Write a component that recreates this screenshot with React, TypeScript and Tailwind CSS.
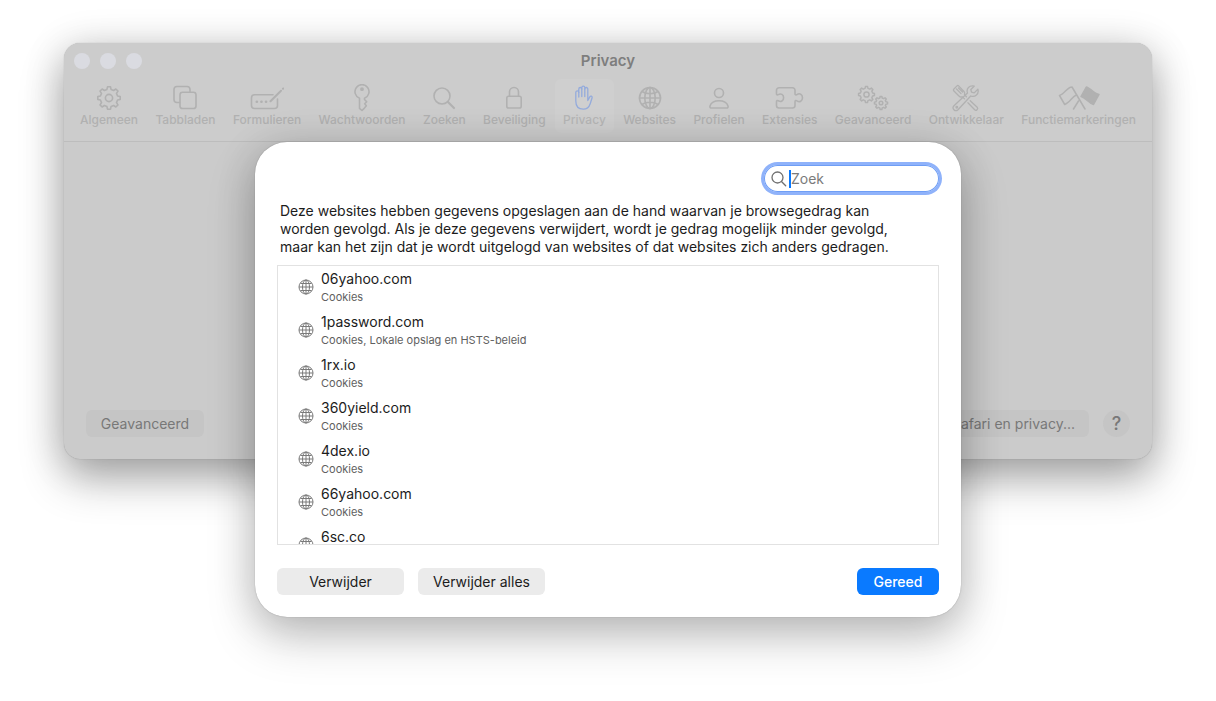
import type { ReactNode } from "react";

const gearPath = (cx: number, cy: number, outer: number, inner: number, teeth = 8) => {
  const step = (Math.PI * 2) / teeth;
  const at = (r: number, a: number) => `${(cx + r * Math.sin(a)).toFixed(2)} ${(cy - r * Math.cos(a)).toFixed(2)}`;
  const pts: string[] = [];
  for (let i = 0; i < teeth; i++) {
    const a = i * step;
    pts.push(at(inner, a - step * 0.3), at(outer, a - step * 0.17), at(outer, a + step * 0.17), at(inner, a + step * 0.3));
  }
  return `M${pts.join("L")}Z`;
};

function Icon({ w, stroke = 1.6, children }: { w: number; stroke?: number; children: ReactNode }) {
  return (
    <svg
      width={w}
      height={28}
      viewBox={`0 0 ${w} 28`}
      fill="none"
      stroke="currentColor"
      strokeWidth={stroke}
      strokeLinecap="round"
      strokeLinejoin="round"
      aria-hidden="true"
    >
      {children}
    </svg>
  );
}

const icons: Record<string, ReactNode> = {
  gear: (
    <Icon w={26}>
      <path d={gearPath(13, 14, 11.3, 8.8)} />
      <circle cx="13" cy="14" r="3.6" />
    </Icon>
  ),
  tabs: (
    <Icon w={26}>
      <path d="M7.5 18.5H5a3 3 0 0 1-3-3v-10a3 3 0 0 1 3-3h10a3 3 0 0 1 3 3V8" />
      <rect x="8" y="8.2" width="16" height="16.3" rx="2.6" />
    </Icon>
  ),
  form: (
    <Icon w={34}>
      <path d="M23 10.7H4.5a3 3 0 0 0-3 3v7.8a3 3 0 0 0 3 3h20a3 3 0 0 0 3-3V15" />
      <path d="M20.5 17.2 31 6.8M33 4.8l.3-.3" strokeWidth="2" />
      <path d="M6.8 17.7h.1M11.4 17.7h.1M16 17.7h.1" strokeWidth="2.6" />
    </Icon>
  ),
  key: (
    <Icon w={18}>
      <path d="M6.5 14.2a7 7 0 1 1 5 0v1.3l2.2 2.2-2 2 1.6 2-2.4 3-1.9 1.8-2.5-2.1z" />
      <circle cx="9" cy="5.2" r="1.1" fill="currentColor" />
    </Icon>
  ),
  search: (
    <Icon w={24}>
      <circle cx="10" cy="12" r="8" />
      <path d="m16.2 18.2 5.8 5.8" strokeWidth="2.2" />
    </Icon>
  ),
  lock: (
    <Icon w={18}>
      <rect x="1.8" y="12.3" width="14.4" height="11.7" rx="1.8" />
      <path d="M4.5 12V8a4.5 4.5 0 0 1 9 0v4" />
    </Icon>
  ),
  hand: (
    <Icon w={20} stroke={1.3}>
      <path d="M1.8 17V8.4a1.4 1.4 0 0 1 3 0V5a1.5 1.5 0 0 1 3 0V3.600a1.5 1.5 0 0 1 3 0V5a1.5 1.5 0 0 1 3 0v11.500l2-3.600c.8-1.400 2.700-.7 2.300.9l-1.900 6c-1.100 3.400-3.300 5.400-6.900 5.400-4.800 0-7.500-2.600-7.500-8.200z" />
      <path d="M4.8 8.400V13M7.800 5v7.500M10.800 5v7.500" />
    </Icon>
  ),
  globe: (
    <Icon w={26}>
      <circle cx="13" cy="14" r="10.5" />
      <ellipse cx="13" cy="14" rx="5.2" ry="10.5" />
      <path d="M13 3.500v21M2.500 14h21M5 7.500c4 3 12 3 16 0M5 20.500c4-3 12-3 16 0" />
    </Icon>
  ),
  person: (
    <Icon w={22}>
      <circle cx="11" cy="9" r="4.5" />
      <path d="M3.5 24c-1.300 0-1.900-.8-1.500-2 1-3.100 4.700-5.200 9-5.200s8 2.100 9 5.200c.4 1.200-.2 2-1.500 2z" />
    </Icon>
  ),
  puzzle: (
    <Icon w={29}>
      <path d="M4 3.800h13.500A2.500 2.500 0 0 1 20 6.300v3.400c0 1.200 1 1.500 1.900.9 2.700-1.800 5.600-.3 5.600 3.100s-2.900 4.900-5.600 3.100c-.9-.6-1.900-.3-1.900.9v3.800a2.500 2.500 0 0 1-2.500 2.500H4a2.500 2.500 0 0 1-2.500-2.500v-3.800c0-1.200.8-1.500 1.800-.9 2.700 1.600 5.300 0 5.300-3.100S6 9 3.300 10.600c-1 .6-1.800.3-1.800-.9V6.300A2.500 2.500 0 0 1 4 3.800z" />
    </Icon>
  ),
  gears: (
    <Icon w={32} stroke={1.5}>
      <path d={gearPath(9.5, 10.5, 8, 6.3)} />
      <circle cx="9.5" cy="10.5" r="2.6" />
      <path d={gearPath(24, 19, 6.6, 5.1)} />
      <circle cx="24" cy="19" r="1.8" />
    </Icon>
  ),
  tools: (
    <Icon w={28} stroke={1.3}>
      <path d="m14.500 12.700-2-2c.2-.9.5-2.100-.5-3.200L6.600 1.900c-.5-.5-1.100-.5-1.600 0L1.700 5.200c-.5.6-.4 1.100 0 1.600l5.500 5.500c1 1 2.200.8 3.200.5l2.100 2.100M4.500 5l4.500 4.600M6.500 4l4 4" />
      <path d="m18.200 16.800 7 6.500c1.400 1.600-1 3.900-2.500 2.500l-6.800-7.100" />
      <path d="M22.300 2.100c-5-1.200-8.300 2.800-6.800 6.900L2 21.700c-2.600 2.800 1 6.600 4 4L18.700 12c4.300 1.700 8.600-2.100 7.200-6.800l-3.700 3.700-2.700-.8-.7-2.600z" />
      <circle cx="4.8" cy="23.2" r=".8" />
    </Icon>
  ),
  flags: (
    <Icon w={42} stroke={1.5}>
      <path d="m14 3 13 22M14 3c-4.300-.4-7.800 7.300-12.500 8.500l5.200 9c4.900-1.400 7.600-8 11.700-9.500M20.500 17l-5 8" />
      <path d="M28.300 3c3.400.3 7.500 6.800 12.700 7.500l-5.500 10c-4.800-1.200-7.800-7-12.500-8z" fill="currentColor" />
    </Icon>
  ),
};

const tabs = [
  { label: "Algemeen", icon: "gear" },
  { label: "Tabbladen", icon: "tabs" },
  { label: "Formulieren", icon: "form" },
  { label: "Wachtwoorden", icon: "key" },
  { label: "Zoeken", icon: "search" },
  { label: "Beveiliging", icon: "lock" },
  { label: "Privacy", icon: "hand", active: true },
  { label: "Websites", icon: "globe" },
  { label: "Profielen", icon: "person" },
  { label: "Extensies", icon: "puzzle" },
  { label: "Geavanceerd", icon: "gears" },
  { label: "Ontwikkelaar", icon: "tools" },
  { label: "Functiemarkeringen", icon: "flags" },
];

const sites = [
  { name: "06yahoo.com", data: "Cookies" },
  { name: "1password.com", data: "Cookies, Lokale opslag en HSTS-beleid" },
  { name: "1rx.io", data: "Cookies" },
  { name: "360yield.com", data: "Cookies" },
  { name: "4dex.io", data: "Cookies" },
  { name: "66yahoo.com", data: "Cookies" },
  { name: "6sc.co", data: "Cookies" },
];

function SiteGlobe() {
  return (
    <svg width="16" height="16" viewBox="0 0 16 16" fill="none" stroke="#7a7a7a" className="shrink-0" aria-hidden="true">
      <circle cx="8" cy="8" r="7" />
      <ellipse cx="8" cy="8" rx="3.5" ry="7" />
      <path d="M8 1v14M1 8h14M2.5 4.5h11M2.5 11.5h11" />
    </svg>
  );
}

function Toolbar() {
  return (
    <nav className="flex justify-between px-2">
      {tabs.map((tab) => (
        <button
          key={tab.label}
          className={`flex h-[54px] flex-col items-center rounded-md px-2 pt-[5px] text-xs font-medium ${
            tab.active ? "bg-[#cfcfcf] text-[#b6b6b6]" : "text-[#b1b1b1]"
          }`}
        >
          <span className={tab.active ? "text-[#94abdc]" : ""}>{icons[tab.icon]}</span>
          <span className="leading-4 whitespace-nowrap">{tab.label}</span>
        </button>
      ))}
    </nav>
  );
}

function WebsiteDataSheet() {
  return (
    <section
      role="dialog"
      aria-label="Websitegegevens"
      className="absolute inset-x-0 top-[99px] mx-auto w-[706px] max-w-full rounded-[32px] bg-white px-[22px] pt-[23px] pb-[22px] shadow-[0_0_1px_rgba(0,0,0,0.4),0_4px_40px_rgba(0,0,0,0.14),0_20px_48px_rgba(0,0,0,0.22)]"
    >
      <label className="relative ml-auto flex h-[27px] w-[175px] items-center rounded-full bg-white pl-[7px] ring-3 ring-[#8fb2fa] inset-ring-1 inset-ring-[#6f9ef5]">
        <svg width="16" height="16" viewBox="0 0 16 16" fill="none" stroke="#707070" strokeWidth="1.3" strokeLinecap="round" className="shrink-0" aria-hidden="true">
          <circle cx="6.5" cy="6.5" r="5.5" />
          <path d="m10.7 10.7 4 4" />
        </svg>
        <span className="absolute left-[25px] h-[18px] w-0.5 bg-[#0a7aff]" />
        <input
          type="text"
          placeholder="Zoek"
          aria-label="Zoek"
          className="ml-1 w-full min-w-0 bg-transparent pt-px text-sm text-black caret-[#0a7aff] outline-none placeholder:text-[#7b7b7b]"
        />
      </label>

      <p className="mt-2.5 max-w-[632px] pl-[3px] text-sm leading-[18px]">
        Deze websites hebben gegevens opgeslagen aan de hand waarvan je browsegedrag kan worden gevolgd. Als je deze
        gegevens verwijdert, wordt je gedrag mogelijk minder gevolgd, maar kan het zijn dat je wordt uitgelogd van
        websites of dat websites zich anders gedragen.
      </p>

      <ul className="mt-[9px] h-[280px] overflow-y-auto border border-[#e2e2e2] pl-5 [scrollbar-width:none]">
        {sites.map((site) => (
          <li key={site.name} className="flex h-[43px] items-center gap-[7px] pb-px">
            <SiteGlobe />
            <div>
              <p className="text-sm leading-5">{site.name}</p>
              <p className="text-[11px] leading-4 text-[#606060]">{site.data}</p>
            </div>
          </li>
        ))}
      </ul>

      <div className="mt-[23px] flex gap-3.5 text-sm">
        <button className="h-[27px] w-[127px] rounded-md bg-[#ebebeb]">Verwijder</button>
        <button className="h-[27px] w-[127px] rounded-md bg-[#ebebeb]">Verwijder alles</button>
        <button className="ml-auto h-[27px] w-[82px] rounded-md bg-[#0a7aff] font-medium text-white">Gereed</button>
      </div>
    </section>
  );
}

export default function App() {
  return (
    <div className="min-h-screen overflow-hidden bg-white px-16 pt-[43px] pb-60 font-['Inter',sans-serif] text-[#1c1c1c]">
      <main className="relative flex h-[416px] flex-col rounded-2xl bg-[#cbcbcb] shadow-[0_0_1px_rgba(0,0,0,0.3),0_4px_40px_rgba(0,0,0,0.16),0_20px_44px_rgba(0,0,0,0.3)]">
        <header className="h-[99px] rounded-t-2xl border-b border-[#bdbdbd] bg-[#cccccc]">
          <div className="relative flex h-9 items-center justify-center">
            <div className="absolute left-2.5 flex gap-2.5">
              <span className="size-4 rounded-full bg-[#dadbe1]" />
              <span className="size-4 rounded-full bg-[#dadbe1]" />
              <span className="size-4 rounded-full bg-[#dadbe1]" />
            </div>
            <h1 className="text-[15px] font-semibold text-[#7e7e7e]">Privacy</h1>
          </div>
          <Toolbar />
        </header>

        <footer className="mt-auto flex items-center px-[22px] pb-[22px] text-sm text-[#787878]">
          <button className="h-[27px] w-[118px] rounded-md bg-[#c5c5c5]">Geavanceerd</button>
          <button className="ml-auto h-[27px] rounded-md bg-[#c5c5c5] px-3.5">Over Safari en privacy...</button>
          <button aria-label="Help" className="ml-3.5 size-[27px] rounded-full bg-[#c5c5c5] text-lg leading-none font-medium">?</button>
        </footer>

        <WebsiteDataSheet />
      </main>
    </div>
  );
}
